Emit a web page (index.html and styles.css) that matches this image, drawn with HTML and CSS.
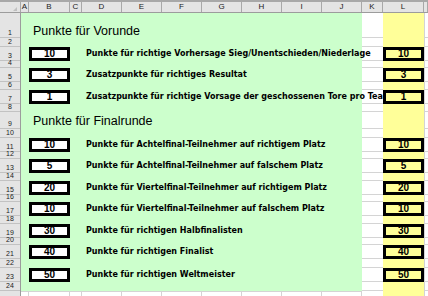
FILE: index.html
```html
<!DOCTYPE html>
<html>
<head>
<meta charset="utf-8">
<link rel="stylesheet" href="styles.css">
</head>
<body>
<div class="app">
  <div class="colhead">
    <div class="corner"><span class="tri"></span></div>
    <div class="ch wA">A</div>
    <div class="ch wB">B</div>
    <div class="ch wC">C</div>
    <div class="ch wD">D</div>
    <div class="ch wD">E</div>
    <div class="ch wD">F</div>
    <div class="ch wD">G</div>
    <div class="ch wD">H</div>
    <div class="ch wD">I</div>
    <div class="ch wD">J</div>
    <div class="ch wK">K</div>
    <div class="ch wB">L</div>
    <div class="ch wM"></div>
  </div>
  <div class="body">
    <div class="rowheads">
      <div class="rh r25">1</div><div class="rh r9">2</div><div class="rh r14">3</div><div class="rh r7">4</div>
      <div class="rh r14">5</div><div class="rh r8">6</div><div class="rh r14">7</div><div class="rh r8">8</div>
      <div class="rh r17">9</div><div class="rh r9">10</div><div class="rh r14">11</div><div class="rh r7">12</div>
      <div class="rh r14">13</div><div class="rh r8">14</div><div class="rh r14">15</div><div class="rh r7">16</div>
      <div class="rh r14">17</div><div class="rh r8">18</div><div class="rh r14">19</div><div class="rh r7">20</div>
      <div class="rh r14">21</div><div class="rh r9">22</div><div class="rh r14">23</div><div class="rh r9">24</div>
      <div class="rh r14"></div>
    </div>
    <div class="mid">
      <div class="main">
        <div class="green">
          <div class="title r25">Punkte für Vorunde</div>
          <div class="r9"></div>
          <div class="item r14"><div class="box">10</div><div class="label">Punkte für richtige Vorhersage Sieg/Unentschieden/Niederlage</div></div>
          <div class="r7"></div>
          <div class="item r14"><div class="box">3</div><div class="label">Zusatzpunkte für richtiges Resultat</div></div>
          <div class="r8"></div>
          <div class="item r14"><div class="box">1</div><div class="label">Zusatzpunkte für richtige Vorsage der geschossenen Tore pro Team</div></div>
          <div class="r8"></div>
          <div class="title title2 r17">Punkte für Finalrunde</div>
          <div class="r9"></div>
          <div class="item r14"><div class="box">10</div><div class="label">Punkte für Achtelfinal-Teilnehmer auf richtigem Platz</div></div>
          <div class="r7"></div>
          <div class="item r14"><div class="box">5</div><div class="label">Punkte für Achtelfinal-Teilnehmer auf falschem Platz</div></div>
          <div class="r8"></div>
          <div class="item r14"><div class="box">20</div><div class="label">Punkte für Viertelfinal-Teilnehmer auf richtigem Platz</div></div>
          <div class="r7"></div>
          <div class="item r14"><div class="box">10</div><div class="label">Punkte für Viertelfinal-Teilnehmer auf falschem Platz</div></div>
          <div class="r8"></div>
          <div class="item r14"><div class="box">30</div><div class="label">Punkte für richtigen Halbfinalisten</div></div>
          <div class="r7"></div>
          <div class="item r14"><div class="box">40</div><div class="label">Punkte für richtigen Finalist</div></div>
          <div class="r9"></div>
          <div class="item r14"><div class="box">50</div><div class="label">Punkte für richtigen Weltmeister</div></div>
          <div class="r9"></div>
        </div>
        <div class="blank r14">
          <div class="bc wA"></div><div class="bc wB"></div><div class="bc wC"></div>
          <div class="bc wD"></div><div class="bc wD"></div><div class="bc wD"></div><div class="bc wD"></div>
          <div class="bc wD"></div><div class="bc wD"></div><div class="bc wD"></div>
        </div>
      </div>
      <div class="gcol wK">
        <div class="gc r25"></div><div class="gc r9"></div><div class="gc r14"></div><div class="gc r7"></div>
        <div class="gc r14"></div><div class="gc r8"></div><div class="gc r14"></div><div class="gc r8"></div>
        <div class="gc r17"></div><div class="gc r9"></div><div class="gc r14"></div><div class="gc r7"></div>
        <div class="gc r14"></div><div class="gc r8"></div><div class="gc r14"></div><div class="gc r7"></div>
        <div class="gc r14"></div><div class="gc r8"></div><div class="gc r14"></div><div class="gc r7"></div>
        <div class="gc r14"></div><div class="gc r9"></div><div class="gc r14"></div><div class="gc r9"></div>
        <div class="gc r14"></div>
      </div>
    </div>
    <div class="yellow wB">
      <div class="r25"></div><div class="r9"></div>
      <div class="ybox r14">10</div><div class="r7"></div>
      <div class="ybox r14">3</div><div class="r8"></div>
      <div class="ybox r14">1</div><div class="r8"></div>
      <div class="r17"></div><div class="r9"></div>
      <div class="ybox r14">10</div><div class="r7"></div>
      <div class="ybox r14">5</div><div class="r8"></div>
      <div class="ybox r14">20</div><div class="r7"></div>
      <div class="ybox r14">10</div><div class="r8"></div>
      <div class="ybox r14">30</div><div class="r7"></div>
      <div class="ybox r14">40</div><div class="r9"></div>
      <div class="ybox r14">50</div><div class="r9"></div>
    </div>
    <div class="gcol mcol">
      <div class="gc r25"></div><div class="gc r9"></div><div class="gc r14"></div><div class="gc r7"></div>
      <div class="gc r14"></div><div class="gc r8"></div><div class="gc r14"></div><div class="gc r8"></div>
      <div class="gc r17"></div><div class="gc r9"></div><div class="gc r14"></div><div class="gc r7"></div>
      <div class="gc r14"></div><div class="gc r8"></div><div class="gc r14"></div><div class="gc r7"></div>
      <div class="gc r14"></div><div class="gc r8"></div><div class="gc r14"></div><div class="gc r7"></div>
      <div class="gc r14"></div><div class="gc r9"></div><div class="gc r14"></div><div class="gc r9"></div>
      <div class="gc r14"></div>
    </div>
  </div>
</div>
</body>
</html>
```
FILE: styles.css
```css
* { box-sizing: border-box; }
html, body { margin: 0; padding: 0; background: #fff; }
.app {
  width: 428px;
  height: 296px;
  overflow: hidden;
  font-family: "Liberation Sans", Arial, sans-serif;
  color: #000;
}
.wA { width: 8px; flex: none; }
.wB { width: 41px; flex: none; }
.wC { width: 12px; flex: none; }
.wD { width: 40px; flex: none; }
.wK { width: 21px; flex: none; }
.wM { flex: 1; }

.r25 { height: 25px; flex: none; }
.r17 { height: 17px; flex: none; }
.r14 { height: 14px; flex: none; }
.r9 { height: 9px; flex: none; }
.r8 { height: 8px; flex: none; }
.r7 { height: 7px; flex: none; }

/* column header */
.colhead {
  display: flex;
  height: 13px;
  background: #e4e4e4;
  border-top: 2px solid #a8a8a8;
  border-bottom: 1px solid #9c9c9c;
}
.corner {
  width: 21px;
  flex: none;
  position: relative;
  border-right: 1px solid #a8a8a8;
}
.tri {
  position: absolute;
  right: 3px;
  bottom: 1px;
  width: 0;
  height: 0;
  border-left: 4px solid transparent;
  border-bottom: 4px solid #c0c0c0;
}
.ch {
  border-right: 1px solid #a8a8a8;
  font-size: 8px;
  line-height: 10px;
  text-align: center;
  color: #222;
}

/* body */
.body {
  display: flex;
  height: 283px;
  overflow: hidden;
}
.rowheads {
  width: 21px;
  flex: none;
  display: flex;
  flex-direction: column;
  background: #e4e4e4;
  border-right: 1px solid #9c9c9c;
}
.rh {
  border-bottom: 1px solid #c2c2c2;
  font-size: 7px;
  color: #222;
  display: flex;
  align-items: flex-end;
  justify-content: center;
  line-height: 6px;
  padding-bottom: 1px;
}
.mid {
  display: flex;
  width: 362px;
  flex: none;
  overflow: hidden;
}
.main {
  width: 341px;
  flex: none;
  display: flex;
  flex-direction: column;
}
.green {
  background: #ccffcc;
  display: flex;
  flex-direction: column;
}
.title {
  display: flex;
  align-items: flex-end;
  padding-left: 12px;
  font-size: 12.5px;
  white-space: nowrap;
}
.title2 { padding-bottom: 1px; }
.item {
  display: flex;
  align-items: stretch;
}
.box {
  margin-left: 8px;
  width: 41px;
  flex: none;
  border: 3px solid #000;
  background: #fff;
  font-weight: bold;
  font-size: 10px;
  line-height: 8px;
  text-align: center;
}
.label {
  margin-left: 16px;
  white-space: nowrap;
  font-family: "DejaVu Sans", sans-serif;
  font-weight: bold;
  font-size: 8px;
  line-height: 14px;
}
.blank {
  display: flex;
  border-top: 1px solid #d4d4d4;
}
.bc {
  border-right: 1px solid #d4d4d4;
}
.gcol {
  display: flex;
  flex-direction: column;
}
.gc {
  border-bottom: 1px solid #d4d4d4;
}
.mcol {
  flex: 1;
  border-left: 1px solid #d4d4d4;
}
.yellow {
  background: #ffff99;
  display: flex;
  flex-direction: column;
}
.ybox {
  border: 3px solid #000;
  font-weight: bold;
  font-size: 10px;
  line-height: 8px;
  text-align: center;
}
```
